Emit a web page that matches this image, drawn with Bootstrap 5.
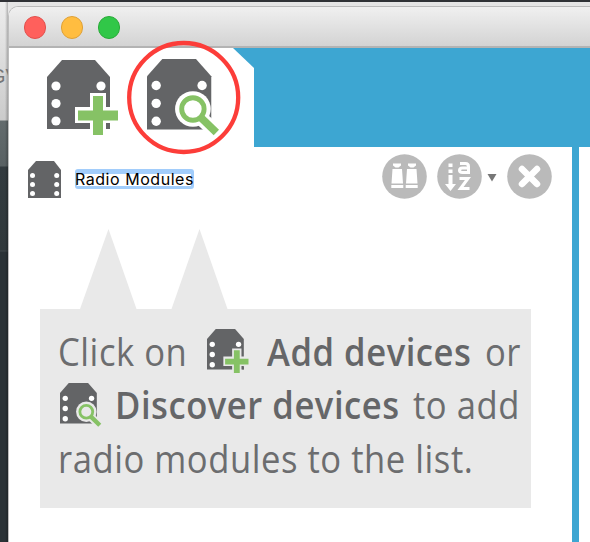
<!DOCTYPE html>
<html lang="en">
<head>
<meta charset="utf-8">
<title>Radio Modules</title>
<link rel="stylesheet" href="https://cdn.jsdelivr.net/npm/bootstrap@5.3.0/dist/css/bootstrap.min.css">
<style>
body{width:590px;height:542px;font-family:"Open Sans",sans-serif;background:#30383b}
.desk{height:542px;border-top:2px solid #303236}
.behind{width:8px;flex:none;background:linear-gradient(90deg,transparent 5px,#0005 9px),linear-gradient(#ededed 0,#cbcbcb 118px,#636b6d 119px,#596163 164px,#333b3f 165px,#30383b 248px,#41494c 249px,#2b3337 250px)}
.behind span{color:#777;font:20px/24px "Liberation Sans",sans-serif;margin:62px 0 0 -10px}
.topgap{background:#e5e5e5}
.win{margin-top:4px;border-top:1px solid #bbb;border-left:1px solid #bdbdbd;border-top-left-radius:10px;background:#fff;width:582px}
.titlebar{height:41px;padding:9px 0 0 14.5px;gap:14.5px;background:linear-gradient(#f0f0f0,#d3d3d3);border-bottom:2px solid #b3b3b3;border-top-left-radius:9px}
.light{width:22.5px;height:22.5px;border:1px solid}
.red{background:#ff605c;border-color:#e2504d}.amber{background:#ffbd40;border-color:#dfa137}.green{background:#31c748;border-color:#29ab38}
.tools{height:99px;background:#3da6d2}
.tabs{width:245px;height:100px;background:#fff;clip-path:polygon(0 0,224px 0,245px 20px,245px 100%,0 100%)}
.tab-add{margin:12px 0 0 38px}.tab-find{margin:11px 0 0 25px}
.ring{left:117px;top:-8px}
.main{height:395px;border-right:7px solid #3da6d2;width:570px}
.head{height:82px;padding-left:18px}
.head .mod{margin:13px 12px 0 0}
.caption-text{margin-top:22px;width:119px;height:20px;border-radius:3px;background:linear-gradient(#fff,#fff) 2px 5px/114px 12px no-repeat,#a2cdfb;color:#000;font:16px/20px Inter,sans-serif;letter-spacing:.54px;white-space:nowrap}
.acts{margin:7px 0 0 188px}
.spikes{height:80px;margin-left:71px}
.tip{--halo:#e9e9e9;margin-left:31px;width:491px;height:199px;background:#e9e9e9;padding:16px 0 0 18px}
.halo{fill:var(--halo,#fff)}
.ln{height:53.3px;line-height:53.3px;font-size:38px;letter-spacing:.6px;color:#6c6d6f;white-space:nowrap}
.ln span,.ln b{display:block;flex:none;transform-origin:0 50%;transform:scaleX(.91)}
.ln b{font-weight:600;color:#656668}
.ln-add{margin:4px 15px 0 -1px}.ln-find{margin:5px 10px 0 2px}
.w1{width:150px}.w2{width:218px}.w3{width:298px}
</style>
<script src="https://cdn.jsdelivr.net/npm/bootstrap@5.3.0/dist/js/bootstrap.bundle.min.js"></script>
</head>
<body class="overflow-hidden m-0">
<svg width="0" height="0" class="position-absolute">
<defs>
<g id="module"><path fill="#636466" d="M15 0H48L63 17V69H0V17Z"/><g fill="#fff"><circle cx="9" cy="26" r="4.6"/><circle cx="9" cy="43.500" r="4.6"/><circle cx="9" cy="61" r="4.6"/><circle cx="54" cy="26" r="4.6"/></g></g>
<g id="add"><use href="#module"/><path class="halo" d="M43 33H59V47H75V63H59V78H43V63H28V47H43Z"/><path fill="#636466" d="M60.500 65h2.500v4h-2.500z"/><path fill="#86c265" d="M46 36H56V50.500H71V60.500H56V75H46V60.500H31V50.500H46Z"/></g>
<g id="find"><use href="#module"/><circle class="halo" cx="45" cy="49" r="17.500"/><path stroke="var(--halo,#fff)" stroke-width="14" d="M53 58L68 72"/><circle cx="45" cy="49" r="11" fill="var(--halo,#fff)" stroke="#86c265" stroke-width="4.800"/><path stroke="#86c265" stroke-width="7.500" d="M52.500 57L68 72"/></g>
</defs>
</svg>
<div class="desk d-flex topgap">
<aside class="behind overflow-hidden d-flex align-items-start"><span>GV</span></aside>
<div class="win flex-shrink-0">
<header class="titlebar d-flex"><i class="light red rounded-circle"></i><i class="light amber rounded-circle"></i><i class="light green rounded-circle"></i></header>
<nav class="tools position-relative">
<div class="tabs d-flex">
<svg class="tab-add" width="75" height="80" viewBox="0 0 75 80"><use href="#add"/></svg>
<svg class="tab-find" width="76" height="80" viewBox="0 0 76 80"><use href="#find" transform="scale(1.02)"/></svg>
</div>
<svg class="ring position-absolute" width="116" height="116"><circle cx="57.700" cy="57.500" r="54.500" fill="none" stroke="#fc3d39" stroke-width="4.300"/></svg>
</nav>
<main class="main">
<div class="head d-flex align-items-start">
<svg class="mod" width="36" height="39" viewBox="0 0 36 39"><path fill="#636466" d="M9 1H27L34 10V38H1V10Z"/><g fill="#fff"><circle cx="5.500" cy="15.500" r="2.500"/><circle cx="5.500" cy="24.500" r="2.500"/><circle cx="5.500" cy="33.500" r="2.500"/><circle cx="29.700" cy="15.500" r="2.500"/><circle cx="29.700" cy="24.500" r="2.500"/><circle cx="29.700" cy="33.500" r="2.500"/></g></svg>
<div class="caption-text">Radio Modules</div>
<svg class="acts" width="171" height="46" viewBox="0 0 171 46">
<g fill="#bababa"><circle cx="22.500" cy="22.500" r="22.300"/><circle cx="77.500" cy="22.500" r="22.300"/><circle cx="147.500" cy="22.500" r="22.300"/></g>
<path fill="#fff" d="M11 9.500h8v2l-2.500 2h-3l-2.500-2zM26 9.500h8v2l-2.500 2h-3l-2.500-2zM10.500 15h9.500l1 14.500h-11.500zM25 15h9.500l1 14.500h-11.500zM9.300 31h12v3h-12zM23.700 31h12v3h-12zM66.500 9.500h4v3.500h-4zM66.500 15.500h4v3.500h-4zM66.500 21h4v9h3.500l-5.500 7-5.500-7h3.500z"/>
<g fill="none" stroke="#fff" stroke-width="3"><path d="M78 9.500h5.500q3 0 3 3v7.500M86 14h-5.500q-3 0-3 2.300t3 2.300H86M77.500 24.500h8.500L78.500 34.500h9"/></g>
<path stroke="#fff" stroke-width="6.500" stroke-linecap="round" d="M140 15l15 15m0-15L140 30"/>
<path fill="#777" d="M105.500 20h9l-4.500 7.500z"/>
</svg>
</div>
<svg class="spikes d-block" width="150" height="80"><path fill="#e9e9e9" d="M28.500 0L56.500 80H0ZM119.500 0L147.500 80H91.500Z"/></svg>
<section class="tip">
<div class="ln d-flex"><span class="w1">Click on</span><svg class="ln-add flex-shrink-0" width="45" height="47" viewBox="0 0 77 80"><use href="#add"/></svg><b class="w2">Add devices</b><span>or</span></div>
<div class="ln d-flex"><svg class="ln-find flex-shrink-0" width="45" height="47" viewBox="0 0 77 80"><use href="#find"/></svg><b class="w3">Discover devices</b><span>to add</span></div>
<div class="ln"><span>radio modules to the list.</span></div>
</section>
</main>
</div>
</div>
</body>
</html>
